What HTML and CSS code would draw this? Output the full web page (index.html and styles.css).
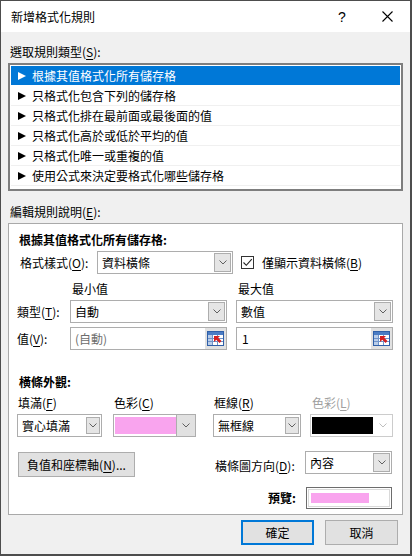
FILE: index.html
```html
<!DOCTYPE html>
<html lang="zh-Hant">
<head>
  <meta charset="UTF-8">
  <title>新增格式化規則</title>
  <link rel="stylesheet" href="styles.css">
</head>
<body>
  <div class="dialog">
    <div class="titlebar">
      <span class="title">新增格式化規則</span>
      <span class="help">?</span>
      <svg class="close" width="11" height="11" viewBox="0 0 11 11">
        <path d="M0.5 0.5L10.5 10.5M10.5 0.5L0.5 10.5" stroke="#000" stroke-width="1.1" fill="none"/>
      </svg>
    </div>

    <div class="content">
      <div class="label top-label">選取規則類型(<u>S</u>):</div>
      <ul class="rule-list">
        <li class="selected"><svg class="arrow" width="8" height="8" viewBox="0 0 8 8"><path d="M0 0L8 4L0 8z"/></svg>根據其值格式化所有儲存格</li>
        <li><svg class="arrow" width="8" height="8" viewBox="0 0 8 8"><path d="M0 0L8 4L0 8z"/></svg>只格式化包含下列的儲存格</li>
        <li><svg class="arrow" width="8" height="8" viewBox="0 0 8 8"><path d="M0 0L8 4L0 8z"/></svg>只格式化排在最前面或最後面的值</li>
        <li><svg class="arrow" width="8" height="8" viewBox="0 0 8 8"><path d="M0 0L8 4L0 8z"/></svg>只格式化高於或低於平均的值</li>
        <li><svg class="arrow" width="8" height="8" viewBox="0 0 8 8"><path d="M0 0L8 4L0 8z"/></svg>只格式化唯一或重複的值</li>
        <li><svg class="arrow" width="8" height="8" viewBox="0 0 8 8"><path d="M0 0L8 4L0 8z"/></svg>使用公式來決定要格式化哪些儲存格</li>
      </ul>

      <div class="label edit-label">編輯規則說明(<u>E</u>):</div>
      <div class="panel">
        <div class="heading">根據其值格式化所有儲存格:</div>

        <div class="style-row">
          <span class="style-label">格式樣式(<u>O</u>):</span>
          <div class="combo style-combo">
            <span class="val">資料橫條</span>
            <span class="drop"><svg width="8" height="5" viewBox="0 0 8 5"><path d="M0.5 0.5L4 4L7.5 0.5" stroke="#606060" fill="none"/></svg></span>
          </div>
          <div class="check">
            <span class="box"><svg width="11" height="11" viewBox="0 0 11 11"><path d="M1.5 5.5L4.3 8.3L9.8 2.2" stroke="#222" stroke-width="1.1" fill="none"/></svg></span>
            <span>僅顯示資料橫條(<u>B</u>)</span>
          </div>
        </div>

        <div class="minmax">
          <span></span>
          <span class="colhead">最小值</span>
          <span class="colhead">最大值</span>

          <span class="row-label">類型(<u>T</u>):</span>
          <div class="combo">
            <span class="val">自動</span>
            <span class="drop"><svg width="8" height="5" viewBox="0 0 8 5"><path d="M0.5 0.5L4 4L7.5 0.5" stroke="#606060" fill="none"/></svg></span>
          </div>
          <div class="combo">
            <span class="val">數值</span>
            <span class="drop"><svg width="8" height="5" viewBox="0 0 8 5"><path d="M0.5 0.5L4 4L7.5 0.5" stroke="#606060" fill="none"/></svg></span>
          </div>

          <span class="row-label value-row">值(<u>V</u>):</span>
          <div class="combo field value-row">
            <span class="val muted">(自動)</span>
            <span class="picker"><svg width="17" height="15" viewBox="0 0 17 15">
              <rect x="0.5" y="0.5" width="16" height="14" fill="#fff" stroke="#2f5fa8"/>
              <rect x="1" y="1" width="15" height="3" fill="#4a7cc4"/>
              <rect x="1" y="4" width="4" height="10" fill="#b9cde9"/>
              <path d="M1 7.5h15M1 10.5h15M5.5 4v10M10.5 4v10" stroke="#6f93c9"/>
              <path d="M7 5L13 5L11.2 6.8L14.5 10.1L12.6 12L9.3 8.7L7 11z" fill="#d42020"/>
            </svg></span>
          </div>
          <div class="combo field value-row">
            <span class="val num">1</span>
            <span class="picker"><svg width="17" height="15" viewBox="0 0 17 15">
              <rect x="0.5" y="0.5" width="16" height="14" fill="#fff" stroke="#2f5fa8"/>
              <rect x="1" y="1" width="15" height="3" fill="#4a7cc4"/>
              <rect x="1" y="4" width="4" height="10" fill="#b9cde9"/>
              <path d="M1 7.5h15M1 10.5h15M5.5 4v10M10.5 4v10" stroke="#6f93c9"/>
              <path d="M7 5L13 5L11.2 6.8L14.5 10.1L12.6 12L9.3 8.7L7 11z" fill="#d42020"/>
            </svg></span>
          </div>
        </div>

        <div class="heading appearance-title">橫條外觀:</div>
        <div class="appearance">
          <div class="cell">
            <span class="cell-label">填滿(<u>F</u>)</span>
            <div class="combo small fill-combo">
              <span class="val">實心填滿</span>
              <span class="drop"><svg width="8" height="5" viewBox="0 0 8 5"><path d="M0.5 0.5L4 4L7.5 0.5" stroke="#606060" fill="none"/></svg></span>
            </div>
          </div>
          <div class="cell">
            <span class="cell-label">色彩(<u>C</u>)</span>
            <div class="combo color-combo">
              <span class="swatch pink"></span>
              <span class="split"><svg width="8" height="5" viewBox="0 0 8 5"><path d="M0.5 0.5L4 4L7.5 0.5" stroke="#606060" fill="none"/></svg></span>
            </div>
          </div>
          <div class="cell">
            <span class="cell-label">框線(<u>R</u>)</span>
            <div class="combo small border-combo">
              <span class="val">無框線</span>
              <span class="drop"><svg width="8" height="5" viewBox="0 0 8 5"><path d="M0.5 0.5L4 4L7.5 0.5" stroke="#606060" fill="none"/></svg></span>
            </div>
          </div>
          <div class="cell">
            <span class="cell-label disabled">色彩(<u>L</u>)</span>
            <div class="combo color-combo off">
              <span class="swatch black"></span>
              <span class="split"><svg width="8" height="5" viewBox="0 0 8 5"><path d="M0.5 0.5L4 4L7.5 0.5" stroke="#bfbfbf" fill="none"/></svg></span>
            </div>
          </div>
        </div>

        <div class="axis-row">
          <button class="btn axis-btn">負值和座標軸(<u>N</u>)...</button>
          <span class="dir-label">橫條圖方向(<u>D</u>):</span>
          <div class="combo dir-combo">
            <span class="val">內容</span>
            <span class="drop"><svg width="8" height="5" viewBox="0 0 8 5"><path d="M0.5 0.5L4 4L7.5 0.5" stroke="#606060" fill="none"/></svg></span>
          </div>
        </div>

        <div class="preview-row">
          <span class="preview-label">預覽:</span>
          <div class="preview">
            <div class="preview-inner"><span class="bar"></span></div>
          </div>
        </div>
      </div>

      <div class="actions">
        <button class="btn ok">確定</button>
        <button class="btn">取消</button>
      </div>
    </div>
  </div>
</body>
</html>
```

FILE: styles.css
```css
body {
  margin: 0;
  font-family: "Noto Sans CJK TC", "Noto Sans", sans-serif;
  font-size: 12px;
  color: #000;
  background: #fff;
}

u {
  text-decoration-thickness: 1px;
  text-underline-offset: 2px;
}

.dialog {
  width: 412px;
  height: 556px;
  box-sizing: border-box;
  border: 1px solid #4d4d4d;
  border-right-width: 2px;
  border-bottom-width: 2px;
  background: #f0f0f0;
}

/* title bar */
.titlebar {
  height: 31px;
  display: flex;
  align-items: center;
  padding: 0 17px 0 10px;
  background: #fff;
  line-height: 16px;
}

.title {
  flex: 1;
}

.help {
  width: 8px;
  font-family: "Liberation Sans", sans-serif;
  font-size: 14px;
  text-align: center;
  margin-right: 36px;
}

.close {
  display: block;
}

.content {
  padding: 0 7px;
}

.label {
  line-height: 16px;
  padding-left: 2px;
}

.top-label {
  margin-top: 12px;
}

/* rule type list */
.rule-list {
  list-style: none;
  margin: 3px 0 0;
  padding: 1px 1px 3px;
  height: 128px;
  box-sizing: border-box;
  border: 2px solid #7e7e7e;
  background: #fff;
}

.rule-list li {
  height: 19px;
  border-bottom: 1px solid #f0f0f0;
  display: flex;
  align-items: center;
  gap: 6px;
  padding-left: 7px;
  line-height: 19px;
}

.rule-list li.selected {
  background: #0078d7;
  color: #fff;
  border-bottom-color: #fff;
}

.arrow {
  fill: #000;
}

.selected .arrow {
  fill: #fff;
}

.edit-label {
  margin-top: 13px;
}

/* edit panel */
.panel {
  margin-top: 3px;
  height: 292px;
  box-sizing: border-box;
  border: 1px solid #a9a9a9;
  background: #fff;
  padding: 8px 10px 0 10px;
}

.heading {
  font-weight: 700;
  line-height: 16px;
}

.combo {
  height: 23px;
  box-sizing: border-box;
  border: 1px solid #adadad;
  background: #fff;
  display: flex;
  align-items: center;
}

.combo .val {
  flex: 1;
  padding-left: 4px;
  line-height: 16px;
  white-space: nowrap;
}

.combo .drop {
  width: 17px;
  height: 19px;
  margin-right: 1px;
  box-sizing: border-box;
  border: 1px solid #adadad;
  background: #e5e5e5;
  display: flex;
  align-items: center;
  justify-content: center;
}

.combo.small .drop {
  width: 14px;
  height: 17px;
}

.combo svg {
  display: block;
}

.style-row {
  margin-top: 3px;
  display: flex;
  align-items: center;
}

.style-label {
  width: 78px;
  line-height: 16px;
  padding-left: 1px;
  box-sizing: border-box;
}

.style-combo {
  width: 136px;
}

.check {
  margin-left: 8px;
  display: flex;
  align-items: center;
  gap: 8px;
  line-height: 16px;
}

.box {
  width: 13px;
  height: 13px;
  box-sizing: border-box;
  border: 1px solid #333;
  display: flex;
  align-items: center;
  justify-content: center;
}

/* min / max grid */
.minmax {
  margin-top: 7px;
  display: grid;
  grid-template-columns: 42px 157px 157px;
  column-gap: 9px;
  row-gap: 3px;
  align-items: center;
}

.colhead {
  line-height: 16px;
  padding-left: 2px;
}

.row-label {
  line-height: 16px;
  margin-left: -2px;
  white-space: nowrap;
}

.value-row {
  margin-top: 1px;
}

.field .muted {
  color: #6d6d6d;
}

.field .num {
  padding-left: 5px;
}

.picker {
  width: 21px;
  height: 21px;
  background: #e1e1e1;
  display: flex;
  align-items: center;
  justify-content: center;
}

/* bar appearance */
.appearance-title {
  margin-top: 24px;
}

.appearance {
  margin: 5px 0 0 -2px;
  display: grid;
  grid-template-columns: 96px 100px 97px 83px;
}

.cell-label {
  display: block;
  line-height: 16px;
  padding-left: 1px;
  margin-bottom: 3px;
}

.cell-label.disabled {
  color: #a0a0a0;
  padding-left: 2px;
}

.fill-combo {
  width: 85px;
}

.border-combo {
  width: 88px;
}

.fill-combo .drop,
.border-combo .drop {
  margin-right: 1px;
}

.color-combo {
  width: 83px;
  padding-left: 1px;
}

.swatch {
  width: 61px;
  height: 17px;
}

.swatch.pink {
  background: #f9a4ee;
}

.swatch.black {
  background: #000;
}

.split {
  flex: 1;
  align-self: stretch;
  margin: -1px -1px -1px 0;
  border: 1px solid #adadad;
  background: #e1e1e1;
  display: flex;
  align-items: center;
  justify-content: center;
}

.color-combo.off {
  border-color: #cccccc;
}

.color-combo.off .split {
  border: none;
  margin: 0;
  background: transparent;
}

/* axis / direction */
.btn {
  height: 25px;
  box-sizing: border-box;
  border: 1px solid #adadad;
  background: #e1e1e1;
  font: inherit;
  color: #000;
  padding: 0;
  line-height: 16px;
}

.axis-row {
  margin-top: 15px;
  display: flex;
  align-items: flex-start;
}

.axis-btn {
  width: 117px;
  margin-left: -1px;
}

.dir-label {
  margin-left: auto;
  width: 90px;
  line-height: 16px;
  margin-top: 6px;
}

.dir-combo {
  width: 87px;
  margin-top: -1px;
}

/* preview */
.preview-row {
  margin-top: 10px;
  display: flex;
  justify-content: flex-end;
  align-items: center;
}

.preview-label {
  font-weight: 700;
  line-height: 16px;
  margin-right: 10px;
}

.preview {
  width: 86px;
  height: 22px;
  box-sizing: border-box;
  border: 1px solid #6d6d6d;
  padding: 1px;
}

.preview-inner {
  height: 100%;
  box-sizing: border-box;
  border: 1px solid #d9d9d9;
  padding: 0 2px;
  display: flex;
  align-items: center;
}

.bar {
  width: 58px;
  height: 10px;
  background: #f9a4ee;
}

/* dialog buttons */
.actions {
  margin-top: 5px;
  display: flex;
  justify-content: flex-end;
  gap: 11px;
  padding-right: 5px;
}

.actions .btn {
  width: 73px;
}

.actions .ok {
  border: 2px solid #0078d7;
}
```
